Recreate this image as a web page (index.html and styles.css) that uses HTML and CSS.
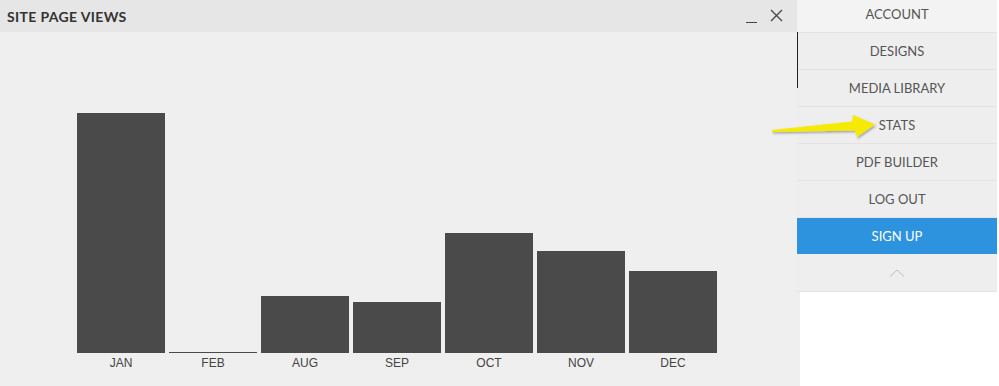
FILE: index.html
```html
<!DOCTYPE html>
<html lang="en">
<head>
    <meta charset="UTF-8">
    <title>Site Page Views</title>
    <link rel="stylesheet" href="styles.css">
</head>
<body>
    <div class="page">
        <div class="panel">
            <div class="panel-header">
                <h2>Site Page Views</h2>
                <div class="window-btns">
                    <span class="btn-min"></span>
                    <svg class="btn-close" width="13" height="13" viewBox="0 0 13 13">
                        <path d="M1 1L12 12M12 1L1 12" stroke="#444" stroke-width="1.3" fill="none"/>
                    </svg>
                </div>
            </div>
            <div class="chart">
                <div class="col"><div class="bar" style="height:240px"></div><span>JAN</span></div>
                <div class="col"><div class="bar" style="height:1px"></div><span>FEB</span></div>
                <div class="col"><div class="bar" style="height:57px"></div><span>AUG</span></div>
                <div class="col"><div class="bar" style="height:51px"></div><span>SEP</span></div>
                <div class="col"><div class="bar" style="height:120px"></div><span>OCT</span></div>
                <div class="col"><div class="bar" style="height:102px"></div><span>NOV</span></div>
                <div class="col"><div class="bar" style="height:82px"></div><span>DEC</span></div>
            </div>
        </div>
        <div class="sidebar">
            <ul class="menu">
                <li class="first">Account</li>
                <li>Designs</li>
                <li>Media Library</li>
                <li>Stats</li>
                <li>PDF Builder</li>
                <li>Log Out</li>
                <li class="signup">Sign Up</li>
                <li class="collapse">
                    <svg width="16" height="8" viewBox="0 0 16 8">
                        <path d="M1 7.5L8 1L15 7.5" stroke="#bdbdbd" stroke-width="1" fill="none"/>
                    </svg>
                </li>
            </ul>
            <div class="card"></div>
        </div>
    </div>
    <svg class="pointer" width="110" height="30" viewBox="0 0 110 30">
        <defs>
            <filter id="shadow" x="-10%" y="-20%" width="130%" height="160%">
                <feDropShadow dx="1" dy="1.5" stdDeviation="1" flood-color="#000" flood-opacity="0.35"/>
            </filter>
        </defs>
        <polygon points="2,17 82,8.5 83,2 105,11.5 87,24 85,17.5 2,19" fill="#f5ea00" filter="url(#shadow)"/>
    </svg>
</body>
</html>
```

FILE: styles.css
```css
body, html {
    margin: 0;
    height: 100%;
    overflow: hidden;
    background: #fff;
}
body {
    position: relative;
    font-family: 'Lato', 'Liberation Sans', sans-serif;
}
.page {
    display: flex;
    height: 386px;
}
.panel {
    width: 797px;
    background: #efefef;
    display: flex;
    flex-direction: column;
}
.panel-header {
    height: 32px;
    background: #e6e6e6;
    display: flex;
    align-items: center;
    justify-content: space-between;
    padding: 0 14px 0 7px;
}
.panel-header h2 {
    margin: 0;
    font-size: 14px;
    font-weight: 700;
    text-transform: uppercase;
    color: #333;
    letter-spacing: 0.35px;
}
.window-btns {
    display: flex;
    align-items: center;
    gap: 13px;
}
.btn-min {
    width: 11px;
    height: 1px;
    background: #444;
    margin-top: 13px;
}
.btn-close {
    margin-top: -2px;
}
.chart {
    flex: 1;
    display: flex;
    align-items: flex-end;
    gap: 4px;
    padding: 0 0 16px 77px;
}
.col {
    width: 88px;
    display: flex;
    flex-direction: column;
    align-items: center;
}
.bar {
    width: 100%;
    background: #4a4a4a;
}
.col span {
    margin-top: 3px;
    line-height: 14px;
    font-family: 'Liberation Sans', Arial, sans-serif;
    font-size: 12px;
    color: #444;
}
.sidebar {
    position: relative;
    width: 200px;
    background: #efefef;
    display: flex;
    flex-direction: column;
}
.sidebar::before {
    content: '';
    position: absolute;
    left: 0;
    top: 32px;
    width: 1px;
    height: 56px;
    background: #222;
}
.menu {
    list-style: none;
    margin: -4px 0 0;
    padding: 0;
}
.menu li {
    height: 36px;
    border-bottom: 1px solid #e3e3e3;
    display: flex;
    align-items: center;
    justify-content: center;
    font-size: 13px;
    text-transform: uppercase;
    color: #555;
    background: #eeeeee;
}
.menu li.first {
    background: #f3f3f3;
}
.menu li.signup {
    background: #2d93de;
    color: #fff;
    border-bottom: none;
}
.menu li.collapse {
    height: 37px;
}
.card {
    flex: 1;
    margin-left: 3px;
    background: #fff;
}
.pointer {
    position: absolute;
    left: 770px;
    top: 113px;
}
```
